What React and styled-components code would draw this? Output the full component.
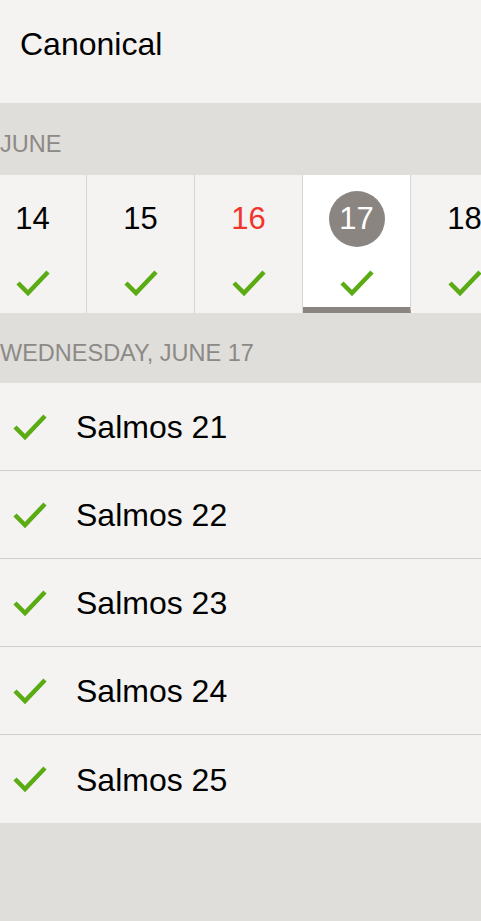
import React from 'react'
import styled, { createGlobalStyle } from 'styled-components'

const GlobalStyle = createGlobalStyle`
    html, body {
        margin: 0;
        padding: 0;
        background: #dfdedb;
        font-family: 'Liberation Sans', Helvetica, Arial, sans-serif;
        -webkit-font-smoothing: antialiased;
    }
`

const Page = styled('div')`
    width: 100%;
    min-height: 921px;
    background: #dfdedb;
    overflow: hidden;
`

const Header = styled('div')`
    box-sizing: border-box;
    height: 103px;
    padding: 26px 0 0 20px;
    background: #f4f3f1;
    color: #000;
    font-size: 32px;
    line-height: 36px;
`

const SectionLabel = styled('div')`
    box-sizing: border-box;
    height: ${props => props.height}px;
    padding-top: ${props => props.top}px;
    color: #8d8985;
    font-size: 23.5px;
    line-height: 26px;
    text-transform: uppercase;
    white-space: nowrap;
`

const Strip = styled('div')`
    display: flex;
    height: 138px;
    margin-left: -21px;
    background: #f4f3f1;
`

const Day = styled('div')`
    box-sizing: border-box;
    flex: 0 0 108px;
    height: 138px;
    display: flex;
    flex-direction: column;
    align-items: center;
    padding-top: 16px;
    gap: 23px;
    border-right: 1px solid #d8d6d3;
    background: ${props => (props.selected ? '#fff' : '#f4f3f1')};
    border-bottom: ${props => (props.selected ? '6px solid #8a8580' : 'none')};
`

const DayNumber = styled('div')`
    width: 56px;
    height: 56px;
    border-radius: 50%;
    display: flex;
    align-items: center;
    justify-content: center;
    font-size: 31px;
    line-height: 56px;
    background: ${props => (props.selected ? '#8a8580' : 'transparent')};
    color: ${props => (props.selected ? '#fff' : props.red ? '#f2342a' : '#000')};
`

const List = styled('div')`
    background: #f4f3f1;
`

const Row = styled('div')`
    box-sizing: border-box;
    height: 88px;
    display: flex;
    align-items: center;
    padding-left: 13px;
    border-bottom: 1px solid #cfcecb;
    &:last-child {
        border-bottom: none;
    }
`

const RowText = styled('span')`
    margin-left: 29px;
    font-size: 32px;
    color: #000;
    padding-top: 2px;
`

const Check = () => (
    <svg width="34" height="26" viewBox="0 0 34 26">
        <path
            d="M2 13 L12 23 L32 2"
            fill="none"
            stroke="#5aab14"
            strokeWidth="4.5"
        />
    </svg>
)

const days = [
    { n: 14 },
    { n: 15 },
    { n: 16, red: true },
    { n: 17, selected: true },
    { n: 18 },
]

const readings = ['Salmos 21', 'Salmos 22', 'Salmos 23', 'Salmos 24', 'Salmos 25']

export default function App() {
    return (
        <Page>
            <GlobalStyle />
            <Header>Canonical</Header>
            <SectionLabel height={72} top={28}>June</SectionLabel>
            <Strip>
                {days.map(day => (
                    <Day key={day.n} selected={day.selected}>
                        <DayNumber selected={day.selected} red={day.red}>
                            {day.n}
                        </DayNumber>
                        <Check />
                    </Day>
                ))}
            </Strip>
            <SectionLabel height={70} top={27}>Wednesday, June 17</SectionLabel>
            <List>
                {readings.map(r => (
                    <Row key={r}>
                        <Check />
                        <RowText>{r}</RowText>
                    </Row>
                ))}
            </List>
        </Page>
    )
}
